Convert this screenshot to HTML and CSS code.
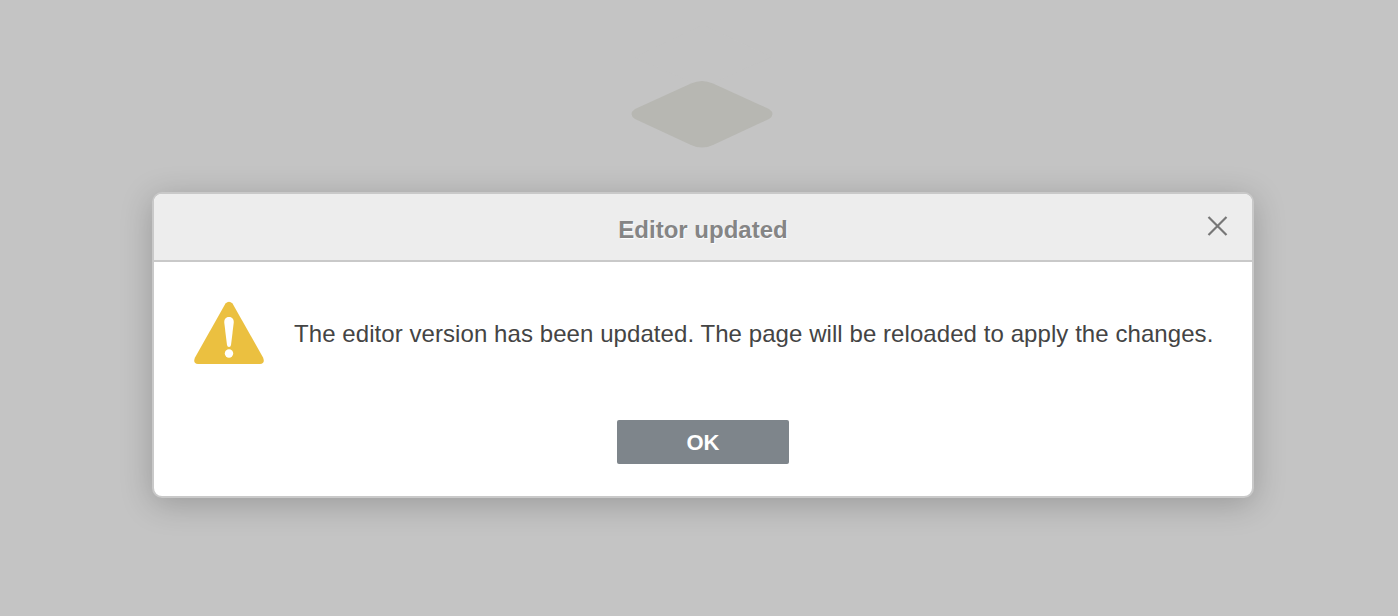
FILE: index.html
```html
<!DOCTYPE html>
<html lang="en">
<head>
<meta charset="utf-8">
<title>Editor updated</title>
<link rel="stylesheet" href="styles.css">
</head>
<body>
<main class="page">
  <svg class="backdrop-logo" width="144" height="124" viewBox="0 0 144 124" aria-hidden="true">
    <path class="logo-faint" d="M72 0 L140 32 L72 62 L4 32 Z"/>
    <path class="logo-main" d="M60 58.500 Q71 53.500 82 58.500 L138 84 Q145 89 138 94 L82 120 Q71 125 60 120 L4 94 Q-3 89 4 84 Z"/>
  </svg>
  <section class="dialog" role="dialog" aria-labelledby="dialog-title">
    <header class="dialog-header">
      <h1 class="dialog-title" id="dialog-title">Editor updated</h1>
      <button class="dialog-close" type="button" aria-label="Close">
        <svg width="22" height="20" viewBox="0 0 22 20" aria-hidden="true">
          <path d="M2.500 1 L20.500 19 M20.500 1 L2.500 19"/>
        </svg>
      </button>
    </header>
    <div class="dialog-body">
      <div class="dialog-message">
        <svg class="warning-icon" width="72" height="64" viewBox="0 0 72 64" aria-hidden="true">
          <path class="warning-triangle" d="M32.500 2.500 Q36 -1 39.500 2.500 L70 56.500 Q72.500 62.800 67 63 L5 63 Q-0.500 62.800 2 56.500 Z"/>
          <path class="warning-mark" d="M36 16 C39.500 16 41 18.500 40.700 22 L38 44 Q37.700 46 36 46 Q34.300 46 34 44 L31.300 22 C31 18.500 32.500 16 36 16 Z"/>
          <circle class="warning-mark" cx="36" cy="52.500" r="4.200"/>
        </svg>
        <p class="dialog-text">The editor version has been updated. The page will be reloaded to apply the changes.</p>
      </div>
      <div class="dialog-actions">
        <button class="ok-button" type="button">OK</button>
      </div>
    </div>
  </section>
</main>
</body>
</html>
```
FILE: styles.css
```css
* { box-sizing: border-box; }

html, body {
  margin: 0;
  height: 100%;
}

body {
  background: #c4c4c4;
  font-family: "Liberation Sans", Arial, sans-serif;
  overflow: hidden;
}

.page {
  display: flex;
  flex-direction: column;
  align-items: flex-start;
  padding: 25px 0 0 152px;
}

.backdrop-logo {
  display: block;
  margin: 0 0 43px 479px;
  overflow: visible;
}

.logo-faint { fill: #c5c5c5; opacity: 0.6; }
.logo-main { fill: #b7b7b2; }

.dialog {
  width: 1102px;
  height: 306px;
  background: #fff;
  border: 2px solid #c9c9c9;
  border-radius: 10px;
  box-shadow: 0 6px 32px rgba(0, 0, 0, 0.22);
  overflow: hidden;
}

.dialog-header {
  position: relative;
  height: 68px;
  padding-top: 5px;
  background: #ededed;
  border-bottom: 2px solid #c9c9c9;
  display: flex;
  align-items: center;
  justify-content: center;
}

.dialog-title {
  margin: 0;
  font-size: 24px;
  font-weight: 700;
  color: #858585;
  text-shadow: 1px 1px 1px #fff;
}

.dialog-close {
  position: absolute;
  top: 22px;
  right: 24px;
  padding: 0;
  width: 22px;
  height: 20px;
  border: 0;
  background: none;
  line-height: 0;
}

.dialog-close path {
  fill: none;
  stroke: #777;
  stroke-width: 2.2;
}

.dialog-body {
  padding: 39px 38px 0 39px;
}

.dialog-message {
  display: flex;
  align-items: center;
  gap: 29px;
}

.warning-icon {
  flex: none;
  overflow: visible;
}

.warning-triangle { fill: #ebc040; }
.warning-mark { fill: #fff; }

.dialog-text {
  margin: 0;
  padding-top: 2px;
  font-size: 24px;
  letter-spacing: 0.07px;
  color: #444;
  white-space: nowrap;
}

.dialog-actions {
  display: flex;
  justify-content: center;
  margin-top: 55px;
}

.ok-button {
  width: 172px;
  height: 44px;
  margin-left: -1px;
  padding: 2px 0 0;
  border: 0;
  border-radius: 2px;
  background: #7e858b;
  color: #fff;
  font: 700 22px "Liberation Sans", Arial, sans-serif;
}
```
